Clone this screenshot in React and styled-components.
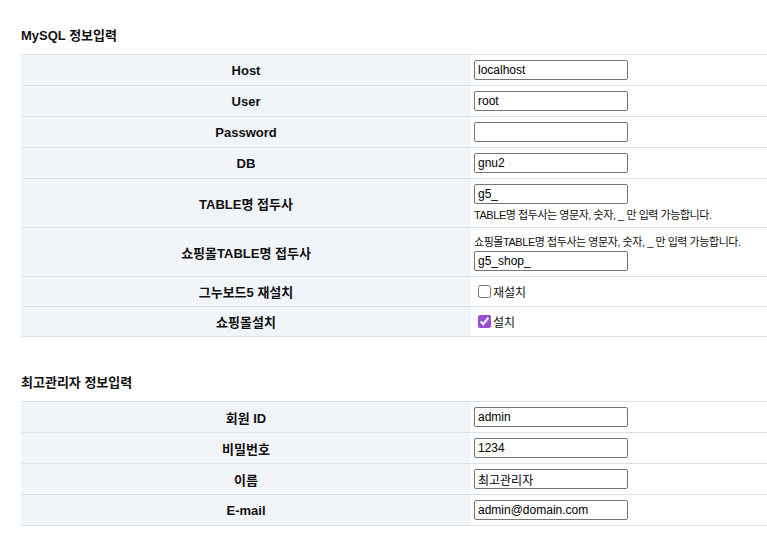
import React from "react";
import styled, { createGlobalStyle } from "styled-components";

const Global = createGlobalStyle`
  html, body { margin: 0; padding: 0; background: #fff; }
  body { font-family: "Liberation Sans", "Noto Sans CJK KR", sans-serif; color: #000; }
`;

const Page = styled.div`
  padding: 27px 0 20px 21px;
  width: 746px;
`;

const Heading = styled.h2`
  margin: ${(p) => (p.$first ? "0" : "37px")} 0 9px;
  font-family: "Liberation Sans", "Noto Sans CJK KR", sans-serif;
  font-size: 13px;
  line-height: 18px;
  font-weight: bold;
  color: #111;
`;

const Table = styled.table`
  width: 746px;
  border-collapse: collapse;
  border-bottom: 1px solid #dde2e8;
`;

const Row = styled.tr`
  border-top: 1px solid #dde2e8;
  height: ${(p) => p.$h || 30}px;
`;

const Label = styled.th`
  width: 450px;
  padding: 0;
  background: #f1f4f9;
  font-family: "Liberation Sans", "Noto Sans CJK KR", sans-serif;
  font-size: 13px;
  font-weight: bold;
  text-align: center;
  vertical-align: middle;
  color: #111;
`;

const Cell = styled.td`
  padding: 0 3px;
  background: #fff;
  vertical-align: middle;
`;

const Field = styled.input`
  box-sizing: border-box;
  display: block;
  width: 154px;
  height: 20px;
  margin: 0;
  padding: 0 3px;
  border: 1px solid #767676;
  border-radius: 2px;
  font-family: "Liberation Sans", "Noto Sans CJK KR", sans-serif;
  font-size: 12px;
  color: #000;
  background: #fff;
`;

const Hint = styled.div`
  font-family: "Liberation Sans", "Noto Sans CJK KR", sans-serif;
  font-size: 11px;
  letter-spacing: -0.45px;
  line-height: 16px;
  margin: ${(p) => (p.$above ? "0 0 1px" : "3px 0 0")};
  color: #111;
`;

const CheckLabel = styled.label`
  display: flex;
  align-items: center;
  gap: 2px;
  font-family: "Noto Sans CJK KR", sans-serif;
  font-size: 12px;
  color: #111;
`;

const Check = styled.input`
  width: 13px;
  height: 13px;
  margin: -1px 0 0 4px;
  accent-color: #9a4fd0;
`;

const mysql = [
  { label: "Host", value: "localhost" },
  { label: "User", value: "root" },
  { label: "Password", value: "" },
  { label: "DB", value: "gnu2" },
];

const admin = [
  { label: "회원 ID", value: "admin" },
  { label: "비밀번호", value: "1234" },
  { label: "이름", value: "최고관리자" },
  { label: "E-mail", value: "admin@domain.com" },
];

export default function App() {
  return (
    <>
      <Global />
      <Page>
        <Heading $first>MySQL 정보입력</Heading>
        <Table>
          <tbody>
            {mysql.map((r) => (
              <Row key={r.label} $h={31}>
                <Label>{r.label}</Label>
                <Cell>
                  <Field defaultValue={r.value} />
                </Cell>
              </Row>
            ))}
            <Row $h={49}>
              <Label>TABLE명 접두사</Label>
              <Cell>
                <Field defaultValue="g5_" />
                <Hint>TABLE명 접두사는 영문자, 숫자, _ 만 입력 가능합니다.</Hint>
              </Cell>
            </Row>
            <Row $h={49}>
              <Label>쇼핑몰TABLE명 접두사</Label>
              <Cell>
                <Hint $above>쇼핑몰TABLE명 접두사는 영문자, 숫자, _ 만 입력 가능합니다.</Hint>
                <Field defaultValue="g5_shop_" />
              </Cell>
            </Row>
            <Row $h={30}>
              <Label>그누보드5 재설치</Label>
              <Cell>
                <CheckLabel>
                  <Check type="checkbox" />
                  재설치
                </CheckLabel>
              </Cell>
            </Row>
            <Row $h={30}>
              <Label>쇼핑몰설치</Label>
              <Cell>
                <CheckLabel>
                  <Check type="checkbox" defaultChecked />
                  설치
                </CheckLabel>
              </Cell>
            </Row>
          </tbody>
        </Table>

        <Heading>최고관리자 정보입력</Heading>
        <Table>
          <tbody>
            {admin.map((r) => (
              <Row key={r.label} $h={31}>
                <Label>{r.label}</Label>
                <Cell>
                  <Field defaultValue={r.value} />
                </Cell>
              </Row>
            ))}
          </tbody>
        </Table>
      </Page>
    </>
  );
}
